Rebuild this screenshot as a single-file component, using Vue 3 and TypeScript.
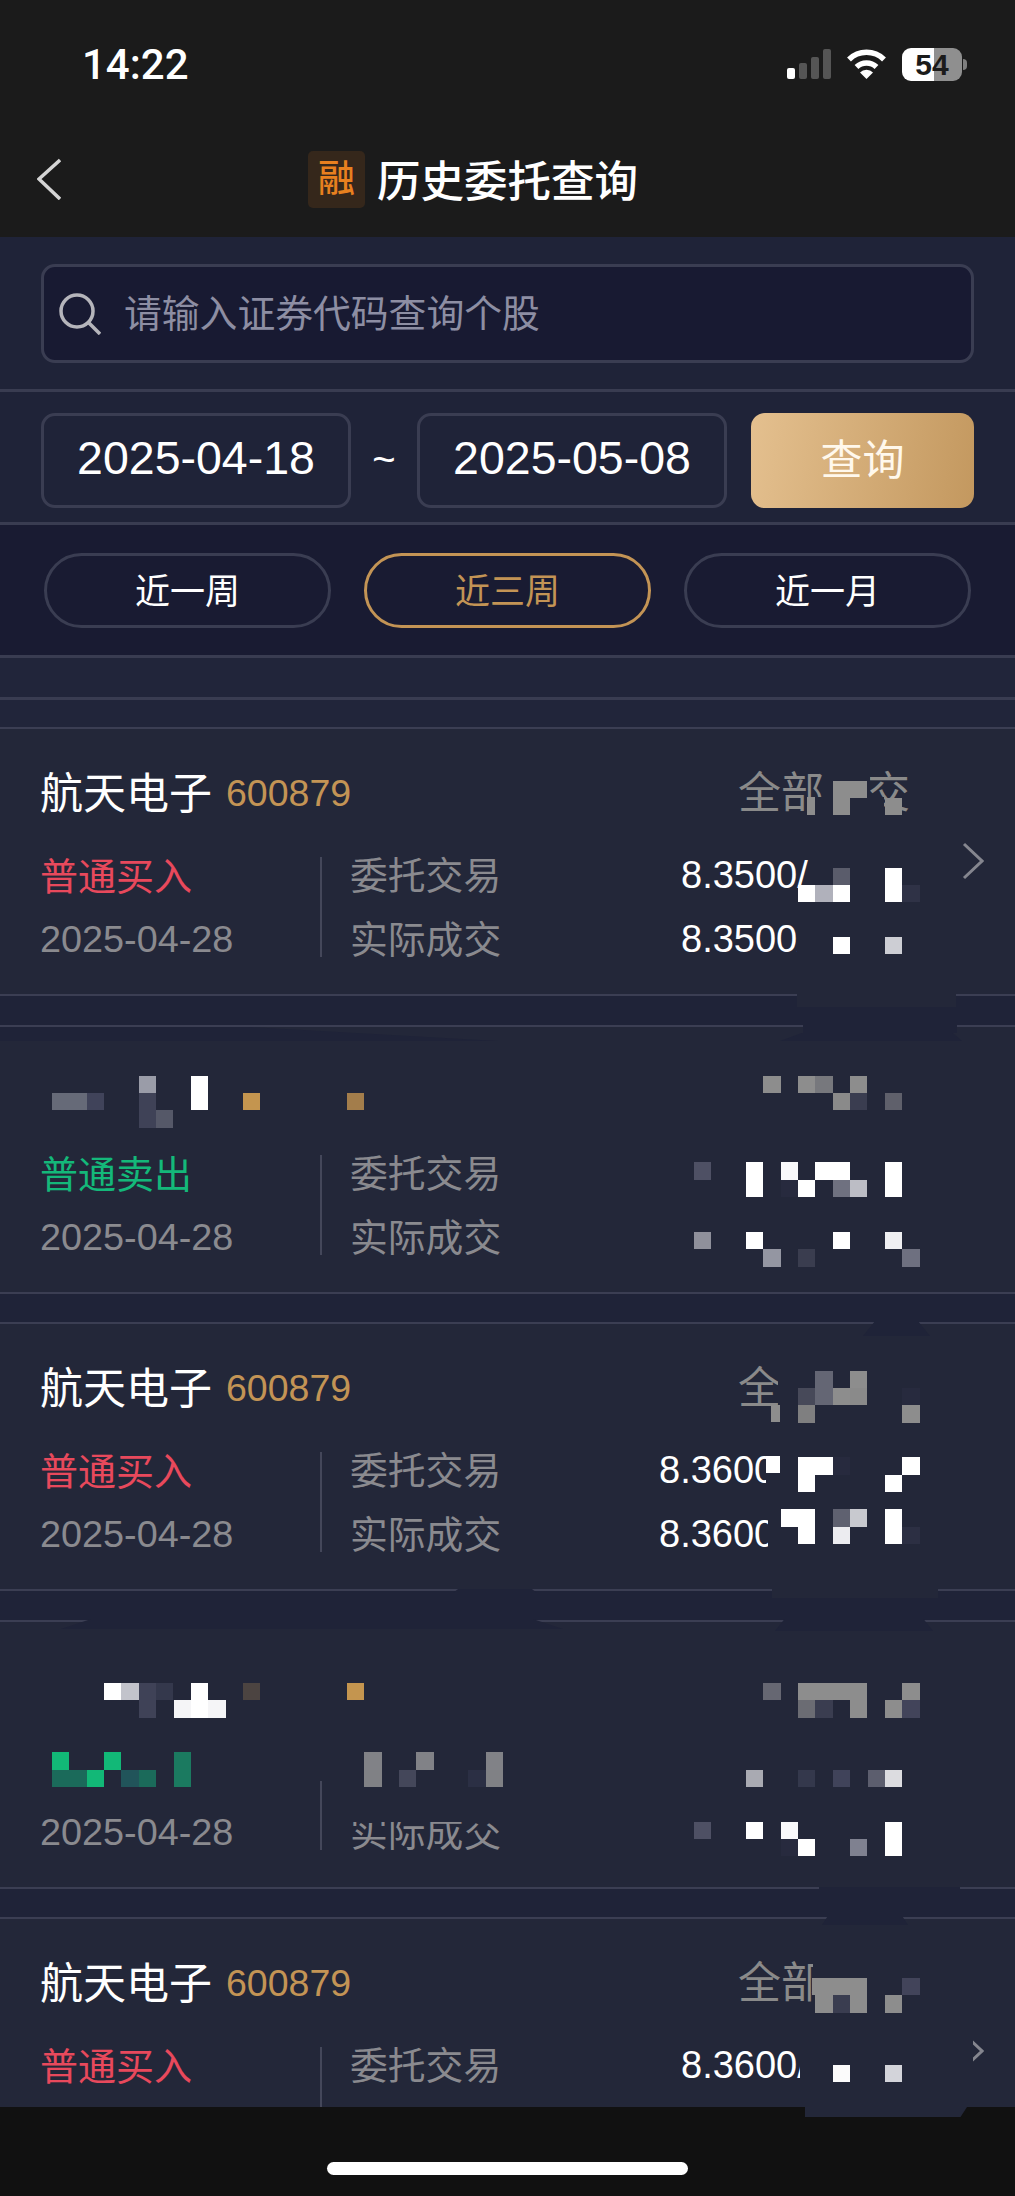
<template>
  <div class="page">
    <header class="top">
      <div class="status">
        <span class="time">14:22</span>
        <div class="status-icons">
          <div class="signal">
            <i /><i /><i /><i />
          </div>
          <svg class="wifi" viewBox="0 0 41 31" fill="none" stroke="#fff">
            <path d="M3 11.5A25 25 0 0 1 38 11.5" stroke-width="5.5" />
            <path d="M10.5 19A14.5 14.5 0 0 1 30.5 19" stroke-width="5.5" />
            <path d="M20.5 31L14 24.5A9 9 0 0 1 27 24.5Z" fill="#fff" stroke="none" />
          </svg>
          <div class="battery"><span>54</span></div>
          <div class="battery-nub" />
        </div>
      </div>
      <div class="nav">
        <svg class="back" viewBox="0 0 24 42" fill="none">
          <path d="M23 2L2 21L23 41" stroke="#d5d5d5" stroke-width="3.5" />
        </svg>
        <span class="badge">融</span>
        <h1 class="title">历史委托查询</h1>
      </div>
    </header>

    <section class="search-bar">
      <div class="search">
        <svg class="search-icon" viewBox="0 0 42 42" fill="none" stroke="#b5b5bb" stroke-width="3.5">
          <circle cx="18" cy="18" r="16" />
          <path d="M29.5 29.5L41 41" />
        </svg>
        <span class="placeholder">请输入证券代码查询个股</span>
      </div>
    </section>

    <section class="date-bar">
      <div class="date">2025-04-18</div>
      <span class="tilde">~</span>
      <div class="date">2025-05-08</div>
      <button class="query">查询</button>
    </section>

    <section class="tabs">
      <div v-for="t in tabs" :key="t.label" class="tab" :class="{ active: t.active }">{{ t.label }}</div>
    </section>

    <div class="spacer" />

    <main class="list">
      <article v-for="(o, i) in orders" :key="i" class="card">
        <div class="head">
          <div class="stock">
            <span class="name">{{ o.name }}</span>
            <span class="code">{{ o.code }}</span>
          </div>
          <span class="state">{{ o.state }}</span>
        </div>
        <div class="body">
          <div class="left">
            <div class="type" :class="o.side">{{ o.type }}</div>
            <div class="when">{{ o.date }}</div>
          </div>
          <div class="sep" />
          <div class="rows">
            <div v-for="(r, j) in o.rows" :key="j" class="row">
              <span class="label">{{ r.label }}</span>
              <span class="value" :style="{ marginLeft: o.valueGap + 'px' }">{{ r.value }}</span>
            </div>
          </div>
        </div>
        <svg v-if="o.chevron" class="more" viewBox="0 0 22 38" fill="none">
          <path d="M2 2L20 19L2 36" stroke="#85868f" stroke-width="3" />
        </svg>
      </article>
    </main>

    <footer class="home"><div class="home-bar" /></footer>

    <!-- privacy mosaic lying over the screenshot content -->
    <div class="mosaic">
      <div
        v-for="(p, i) in patches"
        :key="'p' + i"
        class="patch"
        :style="{ left: p[0] + 'px', top: p[1] + 'px', width: p[2] + 'px', height: p[3] + 'px', background: p[4], clipPath: p[5] }"
      />
      <div
        v-for="(c, i) in cells"
        :key="'c' + i"
        class="cell"
        :style="{ left: c[0] * CELL + 'px', top: c[1] * CELL + 'px', background: c[2] }"
      />
    </div>
  </div>
</template>

<script setup lang="ts">
type Cell = [number, number, string];
type Patch = [number, number, number, number, string, string?];

const CELL = 17.35;

const tabs = [
  { label: "近一周", active: false },
  { label: "近三周", active: true },
  { label: "近一月", active: false },
];

const orders = [
  {
    name: "航天电子", code: "600879", state: "全部成交", type: "普通买入", side: "buy", date: "2025-04-28",
    rows: [{ label: "委托交易", value: "8.3500/" }, { label: "实际成交", value: "8.3500/" }],
    valueGap: 184, chevron: true,
  },
  {
    name: "", code: "", state: "", type: "普通卖出", side: "sell", date: "2025-04-28",
    rows: [{ label: "委托交易", value: "" }, { label: "实际成交", value: "" }],
    valueGap: 184, chevron: false,
  },
  {
    name: "航天电子", code: "600879", state: "全部成交", type: "普通买入", side: "buy", date: "2025-04-28",
    rows: [{ label: "委托交易", value: "8.3600" }, { label: "实际成交", value: "8.3600" }],
    valueGap: 162, chevron: false,
  },
  {
    name: "", code: "", state: "", type: "", side: "buy", date: "2025-04-28",
    rows: [{ label: "", value: "" }, { label: "实际成交", value: "" }],
    valueGap: 184, chevron: false,
  },
  {
    name: "航天电子", code: "600879", state: "全部成交", type: "普通买入", side: "buy", date: "",
    rows: [{ label: "委托交易", value: "8.3600/" }, { label: "", value: "" }],
    valueGap: 184, chevron: true,
  },
];

const C = "#232739"; // card
const G = "#1f2338"; // gap
const W = "#ffffff";
const K = "#8d8d8d";
const TRAP = "polygon(6% 0, 94% 0, 100% 100%, 0 100%)";

const patches: Patch[] = [
  // card 1
  [824, 768, 46, 50, C],
  [805, 797, 20, 18, C],
  [807, 797, 8, 18, K],
  [868, 797, 16, 18, C],
  [797, 922, 30, 34, C],
  // smears around the dividers
  [797, 990, 159, 17, C],
  [803, 1007, 154, 26, G],
  [780, 1033, 182, 8, G, "polygon(12% 0, 95% 0, 100% 100%, 0 100%)"],
  [0, 1027, 498, 14, G, "polygon(0 0, 50% 0, 100% 100%, 0 100%)"],
  [863, 1321, 67, 15, G, "polygon(18% 0, 82% 0, 100% 100%, 0 100%)"],
  // card 3
  [778, 1355, 135, 75, C],
  [771, 1405, 9, 17, K],
  [766, 1452, 24, 40, C],
  [766, 1456, 14, 17, W],
  [768, 1512, 24, 40, C],
  [772, 1589, 166, 9, C],
  [453, 1589, 84, 4, G, TRAP],
  [775, 1619, 158, 12, G, TRAP],
  [61, 1619, 502, 10, G, TRAP],
  // card 4
  [312, 1740, 18, 41, C],
  [819, 1887, 141, 6, G],
  [822, 1917, 86, 8, G, TRAP],
  // card 5
  [813, 1955, 100, 57, C],
  [812, 1978, 3, 17, K],
  [800, 2048, 30, 40, C],
  [950, 2028, 23, 50, C],
  [805, 2107, 162, 10, C, "polygon(0 0, 100% 0, 96% 100%, 0 100%)"],
];

const cells: Cell[] = [
  // card 1
  [48, 45, K], [49, 45, K], [48, 46, K], [51, 46, K],
  [48, 50, "#5a5c6b"], [51, 50, W],
  [46, 51, W], [47, 51, "#b0b1bb"], [48, 51, W], [51, 51, W], [52, 51, "#2f3246"],
  [48, 54, W], [51, 54, "#cdced4"],
  // card 2
  [8, 62, "#9a9ca8"], [11, 62, W], [44, 62, K], [46, 62, K], [47, 62, "#77787d"], [49, 62, K],
  [3, 63, "#666a78"], [4, 63, "#666a78"], [5, 63, "#40435a"], [8, 63, "#3f4257"], [11, 63, W],
  [14, 63, "#c4954f"], [20, 63, "#a37d4b"], [48, 63, "#8a8a8a"], [49, 63, "#3a3d50"], [51, 63, "#5f606b"],
  [8, 64, "#3f4257"], [9, 64, "#555868"],
  [40, 67, "#4e5064"], [43, 67, W], [45, 67, "#f9f9fb"], [47, 67, W], [48, 67, W], [51, 67, W],
  [43, 68, W], [45, 68, "#272a3e"], [46, 68, W], [48, 68, "#6f7180"], [49, 68, "#bcbdc5"], [51, 68, W],
  [40, 71, "#8f909b"], [43, 71, W], [48, 71, W], [51, 71, "#efeff2"],
  [44, 72, "#9496a2"], [46, 72, "#3a3d4f"], [52, 72, "#6e7080"],
  // card 3
  [47, 79, "#646674"], [49, 79, K],
  [46, 80, "#474959"], [47, 80, "#646674"], [48, 80, K], [49, 80, "#8a8a8a"], [52, 80, "#272a3e"],
  [46, 81, "#7f7f80"], [52, 81, K],
  [46, 84, W], [47, 84, W], [48, 84, "#272a3e"], [52, 84, W],
  [46, 85, W], [51, 85, W],
  [45, 87, W], [46, 87, W], [48, 87, "#5f6170"], [49, 87, "#c8c9cf"], [51, 87, W],
  [46, 88, W], [48, 88, "#ececf0"], [51, 88, W], [52, 88, "#2c2f43"],
  // card 4
  [6, 97, W], [7, 97, "#c2c3cb"], [8, 97, "#3f4257"], [9, 97, "#34384c"], [11, 97, W],
  [14, 97, "#4c4441"], [20, 97, "#c4954f"],
  [44, 97, "#666772"], [46, 97, K], [47, 97, K], [48, 97, K], [49, 97, K], [52, 97, K],
  [8, 98, "#3f4257"], [10, 98, "#f5f5f7"], [11, 98, W], [12, 98, "#f5f5f7"],
  [46, 98, "#6b6c73"], [47, 98, "#3a3d50"], [49, 98, K], [51, 98, K], [52, 98, "#42445a"],
  [3, 101, "#12b877"], [6, 101, "#12b877"], [10, 101, "#1b7a60"],
  [21, 101, "#818287"], [24, 101, "#818287"], [28, 101, "#818287"],
  [3, 102, "#1b6a5a"], [4, 102, "#1b6a5a"], [5, 102, "#12b877"], [7, 102, "#21545a"], [8, 102, "#1b6a5a"], [10, 102, "#1b7a60"],
  [21, 102, "#808185"], [23, 102, "#44475a"], [27, 102, "#2b2f44"], [28, 102, "#808185"],
  [43, 102, "#a9aab2"], [46, 102, "#34384c"], [48, 102, "#40435a"], [50, 102, "#5c5e6e"], [51, 102, "#dcdce0"],
  [20, 104, C], [21, 104, C], [22, 104, C], [23, 104, C], [24, 104, C], [25, 104, C], [26, 104, C], [27, 104, C], [28, 104, C],
  [40, 105, "#4e5064"], [43, 105, W], [45, 105, "#f9f9fb"], [51, 105, W],
  [45, 106, "#272a3e"], [46, 106, W], [49, 106, "#7f8190"], [51, 106, W],
  // card 5
  [47, 114, K], [48, 114, K], [49, 114, K], [52, 114, "#42445a"],
  [47, 115, K], [48, 115, "#3a3d50"], [49, 115, K], [51, 115, K],
  [48, 119, "#fbfbfb"], [51, 119, "#d3d4da"],
];
</script>

<style scoped>
.page {
  position: relative;
  width: 1015px;
  height: 2196px;
  overflow: hidden;
  display: flex;
  flex-direction: column;
  background: #1f2338;
  font-family: "Liberation Sans", "Noto Sans CJK SC", sans-serif;
  color: #fff;
}
.top {
  height: 237px;
  flex: none;
  background: #1b1b1b;
}
.status {
  height: 130px;
  display: flex;
  justify-content: space-between;
  padding: 44px 48px 0 82px;
  box-sizing: border-box;
}
.time {
  font-family: Roboto, "Liberation Sans", sans-serif;
  font-size: 42px;
  font-weight: 500;
  line-height: 42px;
}
.status-icons {
  display: flex;
  align-items: flex-start;
  margin-top: 4px;
}
.signal {
  display: flex;
  align-items: flex-end;
  gap: 4px;
  height: 31px;
}
.signal i {
  width: 8px;
  border-radius: 2px;
  background: #555;
}
.signal i:nth-child(1) { height: 11px; background: #fff; }
.signal i:nth-child(2) { height: 16px; }
.signal i:nth-child(3) { height: 22px; }
.signal i:nth-child(4) { height: 30px; }
.wifi {
  width: 41px;
  height: 31px;
  margin-left: 15px;
}
.battery {
  width: 60px;
  height: 33px;
  margin-left: 15px;
  border-radius: 9px;
  background: linear-gradient(90deg, #fff 0 53.5%, #8f8f8f 53.5% 100%);
  color: #1b1b1b;
  font-size: 30px;
  font-weight: 700;
  line-height: 33px;
  text-align: center;
}
.battery-nub {
  width: 4px;
  height: 11px;
  margin: 11px 0 0 1px;
  border-radius: 0 4px 4px 0;
  background: #7f7f7f;
}
.nav {
  display: flex;
  align-items: center;
  height: 98px;
  padding-left: 37px;
}
.back {
  width: 24px;
  height: 42px;
  margin-right: 247px;
}
.badge {
  width: 57px;
  height: 57px;
  border-radius: 5px;
  background: #35271b;
  color: #e8801f;
  font-size: 37px;
  font-weight: 500;
  line-height: 57px;
  text-align: center;
}
.title {
  margin: 6px 0 0 12px;
  font-size: 43.5px;
  font-weight: 500;
  line-height: 66px;
}
.search-bar {
  height: 155px;
  box-sizing: border-box;
  padding: 27px 41px 0;
  border-bottom: 3px solid #393c51;
  flex: none;
}
.search {
  height: 99px;
  box-sizing: border-box;
  display: flex;
  align-items: center;
  padding-left: 15px;
  background: #181a32;
  border: 3px solid #3a3d52;
  border-radius: 14px;
}
.search-icon {
  width: 42px;
  height: 42px;
  margin-right: 23px;
}
.placeholder {
  color: #8d8ea3;
  font-size: 37.8px;
  line-height: 1;
  padding-top: 2px;
}
.date-bar {
  height: 133px;
  box-sizing: border-box;
  flex: none;
  display: flex;
  align-items: flex-start;
  padding: 21px 41px 0;
  border-bottom: 3px solid #393c51;
}
.date {
  width: 310px;
  height: 95px;
  box-sizing: border-box;
  border: 3px solid #3a3d52;
  border-radius: 14px;
  font-size: 46.5px;
  line-height: 84px;
  text-align: center;
}
.tilde {
  width: 66px;
  font-size: 40px;
  line-height: 92px;
  text-align: center;
}
.query {
  width: 223px;
  height: 95px;
  margin-left: 24px;
  padding: 0 0 8px;
  border: 0;
  border-radius: 14px;
  background: linear-gradient(100deg, #e4c08f, #c3985f);
  color: #fff8ec;
  font: inherit;
  font-size: 42px;
}
.tabs {
  height: 133px;
  box-sizing: border-box;
  flex: none;
  display: flex;
  gap: 33px;
  padding: 28px 0 0 44px;
  background: #191b32;
  border-bottom: 3px solid #393c51;
}
.tab {
  width: 287px;
  height: 75px;
  box-sizing: border-box;
  border: 3px solid #3a3d52;
  border-radius: 38px;
  font-size: 35px;
  line-height: 71px;
  text-align: center;
}
.tab.active {
  border-color: #c39455;
  color: #c39455;
}
.spacer {
  height: 69px;
  flex: none;
  background: linear-gradient(#21253a 0 39px, #393c51 39px 42px, #21253a 42px);
}
.list {
  flex: 1;
  min-height: 0;
  overflow: hidden;
}
.card {
  position: relative;
  height: 269px;
  box-sizing: border-box;
  margin-bottom: 28.5px;
  padding: 0 105px 0 41px;
  background: #232739;
  border-top: 2.5px solid #3b3e53;
  border-bottom: 2.5px solid #3b3e53;
}
.head {
  display: flex;
  justify-content: space-between;
  align-items: center;
  height: 56px;
  margin-top: 32px;
}
.stock {
  display: flex;
  align-items: center;
}
.name {
  font-size: 43px;
  margin: 2px 0 0 -1px;
}
.code {
  margin: 8px 0 0 14px;
  color: #c39455;
  font-size: 37.5px;
}
.state {
  color: #8a8a8a;
  font-size: 43px;
}
.body {
  display: flex;
  align-items: center;
  height: 128px;
  margin-top: 26px;
}
.left {
  width: 279px;
  flex: none;
}
.type,
.when,
.row {
  height: 64px;
  line-height: 64px;
}
.type {
  font-size: 38px;
  line-height: 68px;
  margin-left: -1px;
}
.type.buy {
  color: #e8495c;
}
.type.sell {
  color: #14b87a;
}
.when {
  color: #8a8a8f;
  font-size: 37.8px;
  margin-left: -1px;
}
.sep {
  width: 2px;
  height: 100px;
  flex: none;
  background: #44475a;
}
.rows {
  padding-left: 28px;
  white-space: nowrap;
}
.row {
  display: flex;
}
.label {
  width: 147px;
  flex: none;
  color: #8a8a8f;
  font-size: 37.8px;
  line-height: 67px;
}
.value {
  font-size: 38px;
}
.more {
  position: absolute;
  left: 962px;
  top: 113px;
  width: 22px;
  height: 38px;
}
.home {
  height: 89px;
  flex: none;
  box-sizing: border-box;
  padding-top: 55px;
  background: #111;
}
.home-bar {
  width: 361px;
  height: 13px;
  margin: 0 auto;
  border-radius: 7px;
  background: #fff;
}
.mosaic {
  position: absolute;
  inset: 0;
  pointer-events: none;
}
.patch {
  position: absolute;
}
.cell {
  position: absolute;
  width: 17.35px;
  height: 17.35px;
}
</style>
